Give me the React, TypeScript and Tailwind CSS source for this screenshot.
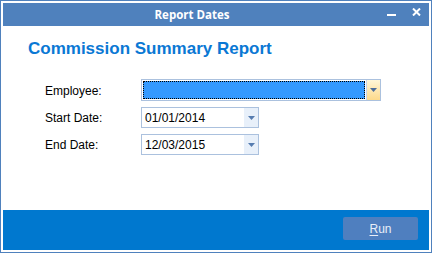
import React from "react";

function Arrow({ color = "#4d6d9a" }: { color?: string }) {
  return (
    <svg width="7" height="4" viewBox="0 0 7 4">
      <path d="M0 0 H7 L3.5 4 Z" fill={color} />
    </svg>
  );
}

function DateBox({ value }: { value: string }) {
  return (
    <div className="flex h-[21px] w-[118px] border border-[#abc1de] bg-white">
      <div className="flex flex-1 items-center pl-[3px] text-[12px] text-black">{value}</div>
      <div className="flex w-[14px] items-center justify-center bg-[#e8f0fa]">
        <Arrow color="#567cb0" />
      </div>
    </div>
  );
}

export default function App() {
  return (
    <div
      className="flex h-[253px] w-[432px] flex-col border border-[#4f81bd] bg-white p-[2px]"
      style={{ fontFamily: '"Liberation Sans", Arial, sans-serif' }}
    >
      <div className="relative flex h-[23px] items-center bg-[#4f81bd] text-white">
        <div
          className="w-full pr-[48px] text-center text-[11.5px] font-bold"
          style={{ fontFamily: '"Open Sans", "DejaVu Sans", sans-serif' }}
        >
          Report Dates
        </div>
        <div className="absolute right-[33px] top-[11px] h-[2px] w-[9px] bg-white" />
        <svg className="absolute right-[8px] top-[5px]" width="9" height="8" viewBox="0 0 9 8">
          <path d="M1 0.5 L8 7.5 M8 0.5 L1 7.5" stroke="white" strokeWidth="2" />
        </svg>
      </div>
      <div className="flex flex-1 flex-col pl-[25px] pt-[12px]">
        <div className="text-[17px] font-bold leading-[22px] text-[#0a78d4]">
          Commission Summary Report
        </div>
        <div className="mt-[19px] grid grid-cols-[96px_auto] items-center gap-y-[6px] pl-[17px] text-[12px] text-black">
          <div className="pt-[2px]">Employee:</div>
          <div className="flex h-[22px] w-[240px] border border-[#abc1de] bg-white">
            <div className="m-[1px] flex-1 border border-dotted border-black bg-[#3399ff]" />
            <div className="flex w-[14px] items-center justify-center border-l border-[#c9d6ea] bg-gradient-to-b from-[#fff6d8] to-[#fdd98a]">
              <Arrow color="#4d6d9a" />
            </div>
          </div>
          <div className="pt-[1px]">Start Date:</div>
          <DateBox value="01/01/2014" />
          <div className="pt-[1px]">End Date:</div>
          <DateBox value="12/03/2015" />
        </div>
      </div>
      <div className="flex h-[40px] items-start justify-end bg-[#0078cf] pr-[11px] pt-[7px]">
        <button className="flex h-[23px] w-[75px] items-center justify-center rounded-[2px] bg-[#4f7fbf] text-[12px] text-[#e8eef8]">
          <span className="underline underline-offset-2">R</span>un
        </button>
      </div>
    </div>
  );
}
